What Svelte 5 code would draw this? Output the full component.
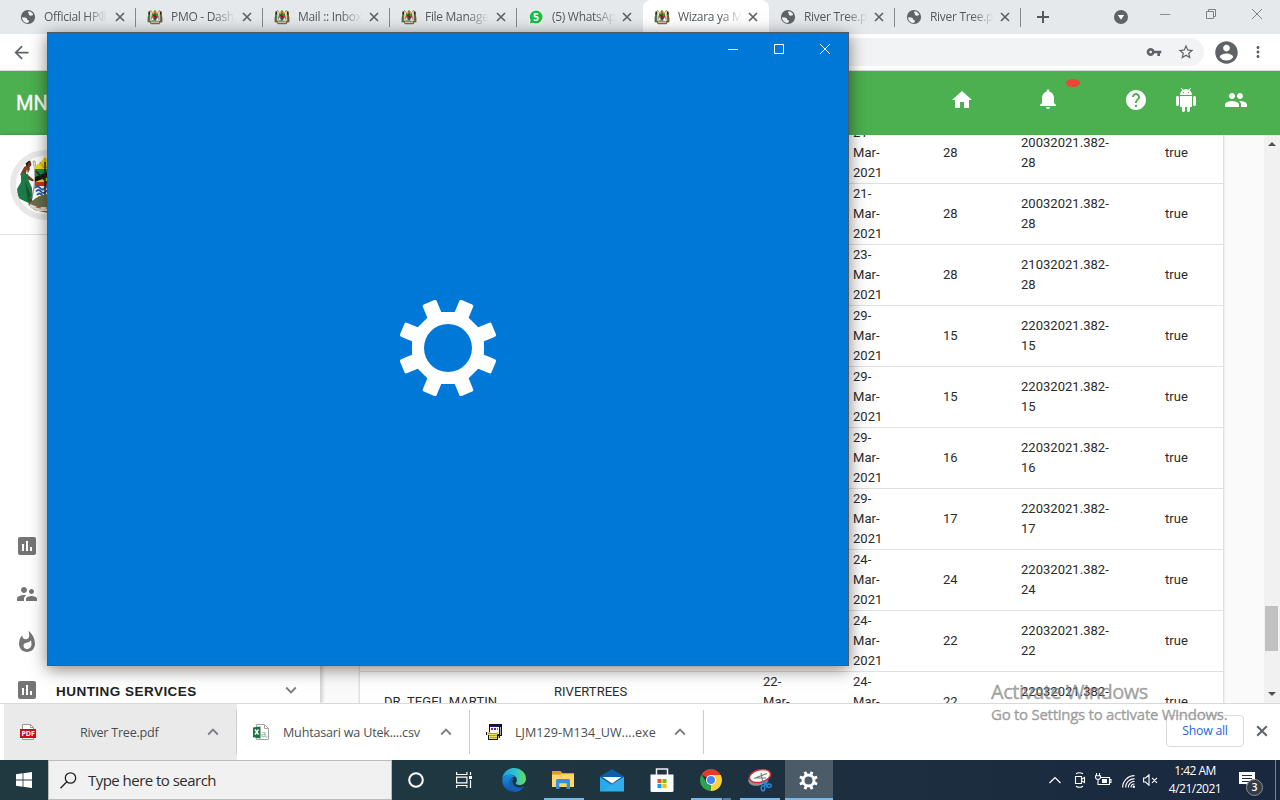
<script>
  const paths = {
    home: 'M10 20v-6h4v6h5v-8h3L12 3 2 12h3v8z',
    bell: 'M12 22c1.1 0 2-.9 2-2h-4c0 1.1.89 2 2 2zm6-6v-5c0-3.07-1.64-5.64-4.5-6.32V4c0-.83-.67-1.5-1.5-1.5s-1.5.67-1.5 1.5v.68C7.63 5.36 6 7.92 6 11v5l-2 2v1h16v-1l-2-2z',
    help: 'M12 2C6.48 2 2 6.48 2 12s4.48 10 10 10 10-4.48 10-10S17.52 2 12 2zm1 17h-2v-2h2v2zm2.07-7.75l-.9.92C13.45 12.9 13 13.5 13 15h-2v-.5c0-1.1.45-2.1 1.17-2.83l1.24-1.26c.37-.36.59-.86.59-1.41 0-1.1-.9-2-2-2s-2 .9-2 2H8c0-2.21 1.79-4 4-4s4 1.79 4 4c0 .88-.36 1.68-.93 2.25z',
    android: 'M6 18c0 .55.45 1 1 1h1v3.5c0 .83.67 1.5 1.5 1.5s1.5-.67 1.5-1.5V19h2v3.5c0 .83.67 1.5 1.5 1.5s1.5-.67 1.5-1.5V19h1c.55 0 1-.45 1-1V8H6v10zM3.5 8C2.67 8 2 8.67 2 9.5v7c0 .83.67 1.5 1.5 1.5S5 17.33 5 16.5v-7C5 8.67 4.33 8 3.5 8zm17 0c-.83 0-1.5.67-1.5 1.5v7c0 .83.67 1.5 1.5 1.5s1.5-.67 1.5-1.5v-7c0-.83-.67-1.5-1.5-1.5zm-4.97-5.84l1.3-1.3c.2-.2.2-.51 0-.71-.2-.2-.51-.2-.71 0l-1.48 1.48C13.85 1.23 12.95 1 12 1c-.96 0-1.86.23-2.66.63L7.85.15c-.2-.2-.51-.2-.71 0-.2.2-.2.51 0 .71l1.31 1.31C6.97 3.26 6 5.01 6 7h12c0-1.99-.97-3.75-2.47-4.84zM10 5H9V4h1v1zm5 0h-1V4h1v1z',
    people: 'M16 11c1.66 0 2.99-1.34 2.99-3S17.66 5 16 5c-1.66 0-3 1.34-3 3s1.34 3 3 3zm-8 0c1.66 0 2.99-1.34 2.99-3S9.66 5 8 5C6.34 5 5 6.34 5 8s1.34 3 3 3zm0 2c-2.33 0-7 1.17-7 3.5V19h14v-2.5c0-2.33-4.67-3.5-7-3.5zm8 0c-.29 0-.62.02-.97.05 1.16.84 1.97 1.97 1.97 3.45V19h6v-2.5c0-2.33-4.67-3.5-7-3.5z',
    chart: 'M19 3H5c-1.1 0-2 .9-2 2v14c0 1.1.9 2 2 2h14c1.1 0 2-.9 2-2V5c0-1.1-.9-2-2-2zM9 17H7v-7h2v7zm4 0h-2V7h2v10zm4 0h-2v-4h2v4z',
    supervisor: 'M16.5 12c1.38 0 2.49-1.12 2.49-2.5S17.88 7 16.5 7C15.12 7 14 8.12 14 9.5s1.12 2.5 2.5 2.5zM9 11c1.66 0 2.99-1.34 2.99-3S10.66 5 9 5C7.34 5 6 6.34 6 8s1.34 3 3 3zm7.5 3c-1.83 0-5.5.92-5.5 2.75V19h11v-2.25c0-1.83-3.67-2.75-5.5-2.75zM9 13c-2.33 0-7 1.17-7 3.5V19h7v-2.25c0-.85.33-2.34 2.37-3.47C10.5 13.1 9.66 13 9 13z',
    flame: 'M13.5.67s.74 2.65.74 4.8c0 2.06-1.35 3.73-3.41 3.73-2.07 0-3.63-1.67-3.63-3.73l.03-.36C5.21 7.51 4 10.62 4 14c0 4.42 3.58 8 8 8s8-3.58 8-8C20 8.61 17.41 3.8 13.5.67zM11.71 19c-1.78 0-3.22-1.4-3.22-3.14 0-1.62 1.05-2.76 2.81-3.12 1.77-.36 3.6-1.21 4.62-2.58.39 1.29.59 2.65.59 4.04 0 2.65-2.15 4.8-4.8 4.8z',
    account: 'M12 2C6.48 2 2 6.48 2 12s4.48 10 10 10 10-4.48 10-10S17.52 2 12 2zm0 3c1.66 0 3 1.34 3 3s-1.34 3-3 3-3-1.34-3-3 1.34-3 3-3zm0 14.2c-2.5 0-4.71-1.28-6-3.22.03-1.99 4-3.08 6-3.08 1.99 0 5.97 1.09 6 3.08-1.29 1.94-3.5 3.22-6 3.22z',
    key: 'M12.65 10C11.83 7.67 9.61 6 7 6c-3.31 0-6 2.69-6 6s2.69 6 6 6c2.61 0 4.83-1.67 5.65-4H17v4h4v-4h2v-4H12.65zM7 14c-1.1 0-2-.9-2-2s.9-2 2-2 2 .9 2 2-.9 2-2 2z',
    star: 'M22 9.24l-7.19-.62L12 2 9.19 8.63 2 9.24l5.46 4.73L5.82 21 12 17.27 18.18 21l-1.63-7.03L22 9.24zM12 15.4l-3.76 2.27 1-4.28-3.32-2.88 4.38-.38L12 6.1l1.71 4.04 4.38.38-3.32 2.88 1 4.28L12 15.4z',
    back: 'M20 11H7.83l5.59-5.59L12 4l-8 8 8 8 1.41-1.41L7.83 13H20v-2z',
    more: 'M12 8c1.1 0 2-.9 2-2s-.9-2-2-2-2 .9-2 2 .9 2 2 2zm0 2c-1.1 0-2 .9-2 2s.9 2 2 2 2-.9 2-2-.9-2-2-2zm0 6c-1.1 0-2 .9-2 2s.9 2 2 2 2-.9 2-2-.9-2-2-2z'
  };

  const tabs = [
    { icon: 'globe', title: 'Official HP®', wide: true, sep: true },
    { icon: 'crest', title: 'PMO - Dash', wide: true, sep: true },
    { icon: 'crest', title: 'Mail :: Inbox', wide: true, sep: true },
    { icon: 'crest', title: 'File Manage', wide: true, sep: true },
    { icon: 'whatsapp', title: '(5) WhatsAp' },
    { icon: 'crest', title: 'Wizara ya M', active: true },
    { icon: 'globe', title: 'River Tree.p', sep: true },
    { icon: 'globe', title: 'River Tree.p', sep: true }
  ];

  const rows = [
    { out: '21-', n: '28', ref: '20032021.382-' },
    { out: '21-', n: '28', ref: '20032021.382-' },
    { out: '23-', n: '28', ref: '21032021.382-' },
    { out: '29-', n: '15', ref: '22032021.382-' },
    { out: '29-', n: '15', ref: '22032021.382-' },
    { out: '29-', n: '16', ref: '22032021.382-' },
    { out: '29-', n: '17', ref: '22032021.382-' },
    { out: '24-', n: '24', ref: '22032021.382-' },
    { out: '24-', n: '22', ref: '22032021.382-' },
    { out: '24-', n: '22', ref: '22032021.382-', name: 'DR. TEGEL MARTIN', place: 'RIVERTREES', in: '22-' }
  ];

  const teeth = [22.5, 67.5, 112.5, 157.5, 202.5, 247.5, 292.5, 337.5];
</script>

{#snippet icon(name, size = 24)}
  <svg class="icon" width={size} height={size} viewBox="0 0 24 24" fill="currentColor"><path d={paths[name]} /></svg>
{/snippet}

{#snippet cross(size, w)}
  <svg class="icon" width={size} height={size} viewBox="0 0 10 10" fill="none" stroke="currentColor" stroke-width={w}><path d="M1 1l8 8M9 1l-8 8" /></svg>
{/snippet}

{#snippet caret(down = false)}
  <svg class="icon caret" width="12" height="8" viewBox="0 0 12 8" fill="none" stroke="#7b7f83" stroke-width="1.9"><path d={down ? 'M1.2 1.5L6 6.3l4.8-4.8' : 'M1.2 6.5L6 1.7l4.8 4.8'} /></svg>
{/snippet}

{#snippet gear(size, hole)}
  <svg class="icon" width={size} height={size} viewBox="-50 -50 100 100">
    <g fill="#fff">
      <path fill-rule="evenodd" d="M-14.9-36H14.9L36-14.9V14.9L14.9 36H-14.9L-36 14.9V-14.9zM{-hole} 0a{hole} {hole} 0 1 0 {hole * 2} 0a{hole} {hole} 0 1 0 {-hole * 2} 0z" />
      {#each teeth as a}
        <rect x="-7.5" y="-49.5" width="15" height="18" rx="1.8" transform="rotate({a})" />
      {/each}
    </g>
  </svg>
{/snippet}

{#snippet favicon(kind)}
  {#if kind === 'globe'}
    <svg class="icon" width="16" height="16" viewBox="0 0 16 16">
      <circle cx="8" cy="8" r="7.1" fill="#5f6368" />
      <path fill="#eef0f1" d="M8.6 2.3c2 .2 3.7 1.4 4.6 3.1l-1 1.1-2 .2-1.4-1 .1-1.1-.9-.8zM2.1 8.3l3.1.2 1.9 1 .1 1.3 1.7.8-.2 1.7-1.6.8c-2.9-.3-5-2.8-5-5.8z" />
    </svg>
  {:else if kind === 'whatsapp'}
    <svg class="icon" width="16" height="16" viewBox="0 0 16 16">
      <path d="M1 15.5l.8-3.7a7.3 7.3 0 1 1 2.7 2.8z" fill="#f4fff7" />
      <circle cx="8.1" cy="8" r="6.4" fill="#12c144" /><path d="M1.9 14.5l1-4 3 3z" fill="#12c144" />
      <text x="8.1" y="11.8" text-anchor="middle" font-size="10.5" font-weight="700" fill="#fff" font-family="Open Sans, sans-serif">5</text>
    </svg>
  {:else}
    <svg class="icon" width="16" height="16" viewBox="0 0 16 16">
      <path d="M1.5 4.2l1.7-3 1.5.9-.9 2.5.9 4-.9 4.7H.6V9z" fill="#4c6e43" />
      <path d="M14.5 4.2l-1.7-3-1.5.9.9 2.5-.9 4 .9 4.7h3.2V9z" fill="#6a5a40" />
      <path d="M3.4 2v10M12.6 2v10" stroke="#d9c9aa" stroke-width="1.1" />
      <path d="M2.2 2.5v3M13.8 2.5v3" stroke="#2f2620" stroke-width="1.6" />
      <path d="M4.8 3.4C6 3 7 2.2 8 .8c1 1.4 2 2.2 3.2 2.6.3 4-1 7.3-3.2 9.200-2.200-1.900-3.500-5.200-3.200-9.200z" fill="#d7b63b" />
      <path d="M4.900 4.600h6.200v1.600H4.900z" fill="#2b8d43" /><path d="M5 6.200h6v2.400H5.300z" fill="#d3282d" /><path d="M5.600 8.600h4.800L8 12z" fill="#2f64b4" />
      <path d="M8 1.500v9M6 6l4 3" stroke="#252b26" stroke-width=".8" />
      <path d="M2 12.500l4-1.200 4 .4 4 1-1.500 2.500H4z" fill="#706f4b" /><path d="M4 13.200h8" stroke="#ddd4c4" stroke-width="1.200" />
    </svg>
  {/if}
{/snippet}

<div class="desktop">
  <div class="browser">
    <div class="tabstrip">
      {#each tabs as t}
        <div class="tab" class:wide={t.wide} class:sep={t.sep} class:active={t.active}>
          {@render favicon(t.icon)}
          <span class="title">{t.title}</span>
          {@render cross(10, 1.7)}
        </div>
      {/each}
      <svg class="icon plus" width="12" height="12" viewBox="0 0 12 12" stroke="#55595d" stroke-width="2"><path d="M6 0v12M0 6h12" /></svg>
      <svg class="icon drop" width="14" height="14" viewBox="0 0 14 14"><circle cx="7" cy="7" r="7" fill="#5f6368" /><path d="M3.8 5h6.400L7 9.800z" fill="#fff" /></svg>
      <div class="winctl">
        <svg class="icon" width="10" height="10" viewBox="0 0 10 10" stroke="#8b8f92"><path d="M0 5.500h10" /></svg>
        <svg class="icon" width="10" height="10" viewBox="0 0 10 10" stroke="#7f8386" fill="none"><path d="M.5 2.500h7v7h-7zM2.500 2.500v-2h7v7h-2" /></svg>
        <svg class="icon" width="10" height="10" viewBox="0 0 10 10" stroke="#7f8386"><path d="M0 0l10 10M10 0L0 10" /></svg>
      </div>
    </div>
    <div class="toolbar">
      <span class="back">{@render icon('back', 21)}</span>
      <div class="omnibox">{@render icon('key', 16)}{@render icon('star', 18)}</div>
      <span class="user">{@render icon('account', 27)}</span>
      {@render icon('more', 18)}
    </div>

    <div class="page">
      <header class="appbar">
        <span class="brand">MN</span>
        <nav>
          {@render icon('home')}
          <span class="bell">{@render icon('bell')}<i class="badge"></i></span>
          {@render icon('help')}
          {@render icon('android')}
          {@render icon('people')}
        </nav>
      </header>
      <div class="body">
        <aside>
          <div class="profile">
            <div class="avatar">
              <svg width="58" height="58" viewBox="0 0 58 58">
                <path d="M17 5q4 14-1 37l-3 6q10-22 6-43z" fill="#f6f3ec" stroke="#8f8b83" stroke-width=".7" />
                <path d="M12 9l-4 2-4 8 6 2 4-8zM11 13l1 6 6 5-1 1.500-8-3z" fill="#7a4226" />
                <path d="M10 7q2-3 5-1l.5 3-2.500 3-3-2z" fill="#6b3520" />
                <path d="M9 7q2-4 6-2l-3 2-1 3z" fill="#1d1512" />
                <path d="M5 17l7 1 .5 6 3.500 8 .5 10-4 5L2 42 1 33l4-7z" fill="#1e7a46" />
                <path d="M9 25l6 14-3 7z" fill="#14582f" />
                <path d="M13 43l3 0 1 6-4-1z" fill="#70391f" />
                <path d="M19 10Q26 6 29 0q3 6 10 10v19q-2 15-10 21-8-6-10-21z" fill="#f2de1d" />
                <path d="M29 2v10M24 6l4 6M34 6l-4 6" stroke="#c7931b" stroke-width="1" />
                <path d="M19 13h20v8l-20 3z" fill="#1f8f3f" /><path d="M19 21l20-8v5l-20 8z" fill="#151713" />
                <path d="M19 26h20v4H19z" fill="#d32f27" /><path d="M19.200 30h19.600l-2 10H21z" fill="#fff" />
                <path d="M19 32q2.500-3 5 0t5 0 5 0 5 0M20 35.500q2.500-3 5 0t5 0 5 0M21 39q2.500-3 5 0t5 0 4 0" stroke="#1f5fb8" stroke-width="1.800" fill="none" />
                <path d="M29 6v34M20 15l15 16" stroke="#262420" stroke-width="1.400" />
                <path d="M12 48l8-6 6-3 6 0 14 9v5l-14 4-14-3z" fill="#69704c" />
                <path d="M14 48l8 3h14l8-3v4l-8 3H22l-8-3z" fill="#ddd8c9" /><path d="M20 51l5 1M30 52h4" stroke="#b5473b" stroke-width="1.200" />
              </svg>
            </div>
          </div>
          <div class="menu">
            <div class="item">{@render icon('chart')}</div>
            <div class="item">{@render icon('supervisor')}</div>
            <div class="item">{@render icon('flame')}</div>
            <div class="item">{@render icon('chart')}<b>HUNTING SERVICES</b>{@render caret(true)}</div>
          </div>
        </aside>
        <main>
          <div class="table">
            {#each rows as r}
              <div class="row">
                <span>{r.name ?? ''}</span>
                <span>{#if r.place}{r.place}<br />&nbsp;{/if}</span>
                <span>{#if r.in}{r.in}<br />Mar-<br />&nbsp;{/if}</span>
                <span>{r.out}<br />Mar-<br />2021</span>
                <span>{r.n}</span>
                <span>{r.ref}<br />{r.n}</span>
                <span>true</span>
              </div>
            {/each}
          </div>
        </main>
        <div class="scrollbar">
          <i class="up"></i>
          <i class="thumb"></i>
          <i class="down"></i>
        </div>
      </div>
    </div>

    <div class="downloads">
      <div class="dl first">
        <svg class="icon" width="16" height="16" viewBox="0 0 16 16"><path d="M2.500.5h8l3 3v12h-11z" fill="#fff" stroke="#999" /><path d="M10.500.5v3h3" fill="none" stroke="#999" /><path d="M0 5h16v9H0z" fill="#cb0d21" /><text x="8" y="12" text-anchor="middle" font-size="7" font-weight="700" fill="#fff" font-family="Open Sans, sans-serif" textLength="13">PDF</text></svg>
        <span>River Tree.pdf</span>{@render caret()}
      </div>
      <div class="dl second">
        <svg class="icon" width="16" height="16" viewBox="0 0 16 16"><path d="M3.500.5h8l4 4v11h-12z" fill="#fff" stroke="#a5a5a5" /><path d="M11.500.5v4h4" fill="none" stroke="#a5a5a5" /><path d="M0 3.500L7.500 2.500v12L0 13.300z" fill="#1f7345" /><path d="M2 5.500l3.500 5M5.500 5.500L2 10.500" stroke="#fff" stroke-width="1.400" /><text x="8" y="13" font-size="9" fill="#5ca77e" font-family="Open Sans, sans-serif">a,</text></svg>
        <span>Muhtasari wa Utek....csv</span>{@render caret()}
      </div>
      <div class="dl third">
        <svg class="icon" width="16" height="16" viewBox="0 0 16 16"><path d="M3 0h13v12h-2v2h-2v2H2v-5H0V8h3z" fill="#111" /><path d="M4 1h10v2H4z" fill="#10108f" /><path d="M4 3h9v7H4z" fill="#fff" /><path d="M14 3h1v8h-1zM12 12h1v2h-1z" fill="#aaa" /><path d="M5 4h2v2H5z" fill="#c0202a" /><path d="M8 4h2v2H8z" fill="#2b36a8" /><path d="M11 4h1v2h-1z" fill="#26976a" /><path d="M1 8h2l2 1h4l2-1h2l-2 3v4H3v-4H1z" fill="#e8e15b" /><path d="M2 9.500h9M3 11.500h8M4 13.500h7" stroke="#8d8726" stroke-width=".7" /></svg>
        <span>LJM129-M134_UW....exe</span>{@render caret()}
      </div>
      <button>Show all</button>
      <span class="closebar">{@render cross(12, 1.7)}</span>
    </div>
  </div>

  <div class="taskbar">
    <div class="start"><svg class="icon" width="16" height="16" viewBox="0 0 16 16" fill="#fff"><path d="M0 2.200L6.600 1.300v6.300H0zM7.400 1.200L16 0v7.600H7.400zM0 8.400h6.600v6.300L0 13.800zM7.400 8.400H16V16l-8.600-1.200z" /></svg></div>
    <div class="search">
      <svg class="icon" width="17" height="17" viewBox="0 0 17 17" fill="none" stroke="#222" stroke-width="1.300"><circle cx="10.500" cy="6" r="5.200" /><path d="M6.800 9.700L.5 16.200" /></svg>
      <span>Type here to search</span>
    </div>
    <div class="apps">
      <div class="app"><svg class="icon" width="18" height="18" viewBox="0 0 18 18"><circle cx="9" cy="9" r="6.800" fill="none" stroke="#fff" stroke-width="2" /></svg></div>
      <div class="app"><svg class="icon" width="17" height="16" viewBox="0 0 17 16" fill="none" stroke="#fff" stroke-width="1.200"><path d="M.6 0v2.500h10.300V0M.6 16v-2.500h10.300V16M.6 5.100h10.300v5.800H.6zM14.500 0v3M14.500 8v8" /><path d="M13 4h3v3h-3z" fill="#fff" stroke="none" /></svg></div>
      <div class="app edge">
        <svg class="icon" width="24" height="24" viewBox="0 0 24 24">
          <defs>
            <linearGradient id="eg" x1="0" y1=".3" x2="1" y2=".3"><stop offset="0" stop-color="#1b9de2" /><stop offset=".6" stop-color="#37c6c9" /><stop offset="1" stop-color="#66df52" /></linearGradient>
            <linearGradient id="eb" x1="0" y1="0" x2="0" y2="1"><stop offset="0" stop-color="#1791dc" /><stop offset="1" stop-color="#1153a8" /></linearGradient>
          </defs>
          <path d="M.3 10.500C1 4.400 6 0 12 0c6.800 0 12 5 12 10.700 0 3.800-2.900 6.300-6.300 6.300-2.600 0-3.900-.9-3.900-1.700 0-.7 1.100-1.200 1.100-3.300C14.900 9 12 6.800 8.400 6.800 4.200 6.800 1 9 .3 10.500z" fill="url(#eg)" />
          <path d="M.2 11.300C1 8.600 4.200 6.800 7.900 6.800c2.200 0 4.300.7 5.500 2-2.300-.3-4.900 1.600-4.900 5 0 4.700 4.400 7.700 8.500 6.900 1.900-.4 3.300-1.100 4.500-2-2 3.300-5.600 5.300-9.500 5.300C5.200 24 0 18.400.2 11.300z" fill="url(#eb)" />
          <path d="M10.500 9.200c-3.500 1.500-4.800 6-2.600 9.600 1.300 2.200 3.600 3.900 6 4.900 3.500-.5 6.300-2.600 7.800-5.300-3 1.900-7.100 1.700-9.400-.7-2-2-2.600-5.400-.7-7.800z" fill="#1463b8" />
        </svg>
      </div>
      <div class="app run"><svg class="icon" width="22" height="20" viewBox="0 0 22 20"><path d="M0 1.500h8.500L10 3.200h12V17H0z" fill="#f9cb4f" /><path d="M0 1h8.500L10 2.800 8.500 4.500H0z" fill="#dda016" /><path d="M0 5h22v12H0z" fill="#ffd869" /><path d="M4 10.500Q4 9 5.500 9h11Q18 9 18 10.500V19h-3.500v-5.500h-7V19H4z" fill="#388fe0" /><path d="M7.500 13.500h7V17h-7z" fill="#ffd45d" /></svg></div>
      <div class="app"><svg class="icon" width="24" height="23" viewBox="0 0 24 23"><path d="M0 7.500L12 0l12 7.500V22H0z" fill="#0b5ea9" /><path d="M0 8l12 8L0 22.500z" fill="#29a8ea" /><path d="M24 8v14.500L12 16z" fill="#1e91db" /><path d="M0 22.500L24 8v14.500z" fill="#2fb0ee" /><path d="M2.500 8h19L12 14.500z" fill="#f3f7fb" /></svg></div>
      <div class="app"><svg class="icon" width="24" height="24" viewBox="0 0 24 24"><path d="M6.500 7V1h11v6" fill="none" stroke="#eee" stroke-width="1.500" /><path d="M.5 6.500h23v16.200q0 1.300-1.300 1.300H1.800Q.5 24 .5 22.700z" fill="#fafafa" /><path d="M7.500 11h4v4h-4z" fill="#f25022" /><path d="M12.500 11h4v4h-4z" fill="#7fba00" /><path d="M7.500 16h4v4h-4z" fill="#00a4ef" /><path d="M12.500 16h4v4h-4z" fill="#ffb900" /></svg></div>
      <div class="app run multi"><svg class="icon" width="22" height="22" viewBox="0 0 22 22"><path d="M11 11L1.500 5.500A11 11 0 0 1 20.500 5.500z" fill="#e33b2e" /><path d="M11 11V6h9.800A11 11 0 0 1 10.700 22z" fill="#fdd13a" /><path d="M1.500 5.500L6.700 13.500l4.300 3-.5 5.500A11 11 0 0 1 1.500 5.500z" fill="#2ba24c" /><path d="M11 6h9.500L15.500 13.500l-5 8.500 1-6z" fill="#fdd13a" /><circle cx="11" cy="11" r="5" fill="#fff" /><circle cx="11" cy="11" r="4" fill="#4486f4" /></svg></div>
      <div class="app run"><svg class="icon" width="24" height="24" viewBox="0 0 24 24"><ellipse cx="10.500" cy="11" rx="10.500" ry="6.500" transform="rotate(-14 10.500 11)" fill="#8d9298" /><ellipse cx="12" cy="8" rx="10.800" ry="6.200" transform="rotate(-14 12 8)" fill="#fff" stroke="#cf3036" stroke-width="1.500" /><path d="M6 10.500l13-5M13 5l2 10M8 10h10" stroke="#777" stroke-width="1.100" /><g fill="none" stroke="#2384d4" stroke-width="1.600"><path d="M14 13l6 6M20 13l-4 5" /><ellipse cx="15" cy="20.300" rx="1.800" ry="2.600" /><ellipse cx="21" cy="17.800" rx="2.300" ry="1.700" /></g></svg></div>
      <div class="app current">{@render gear(19, 21)}</div>
    </div>
    <div class="tray">
      <svg class="icon chev" width="12" height="8" viewBox="0 0 12 8" fill="none" stroke="#fff" stroke-width="1.200"><path d="M.5 7L6 1.500 11.500 7" /></svg>
      <svg class="icon meet" width="12" height="16" viewBox="0 0 12 16" fill="none" stroke="#fff" stroke-width="1.100"><path d="M2 1.800Q5.500-.4 9 1.800M2 14.200q3.500 2.200 7 0M1.500 4.500h6v7h-6zM8 7l2.500-1.500v5L8 9" /></svg>
      <svg class="icon batt" width="17" height="14" viewBox="0 0 17 14" fill="none" stroke="#fff" stroke-width="1.100"><path d="M5 4.500h9.500v7H4M14.500 6.500H16v3h-1.500M1.500 0v2.500M4.500 0v2.500M.5 2.700h5v2Q5 6.500 3 6.500T.5 4.700zM3 6.500v5h1" /><path d="M7 6h5v4H7z" fill="#fff" stroke="none" /></svg>
      <svg class="icon wifi" width="13" height="13" viewBox="0 0 13 13" fill="none" stroke="#fff" stroke-width="1.100"><path d="M.6 12.500A12 12 0 0 1 12.500.6M3.600 12.500A9 9 0 0 1 12.500 3.600M6.300 12.500a6.300 6.300 0 0 1 6.200-6.200M9 12.500A3.500 3.500 0 0 1 12.500 9" /><circle cx="11.800" cy="11.800" r="1.200" fill="#fff" stroke="none" /></svg>
      <svg class="icon vol" width="15" height="12" viewBox="0 0 15 12" fill="none" stroke="#fff" stroke-width="1.100"><path d="M.6 4h2L6 .8v10.400L2.600 8h-2zM9 3.800l5 5M14 3.800l-5 5" /></svg>
      <div class="clock">1:42 AM<br />4/21/2021</div>
      <div class="notes"><svg class="icon" width="16" height="16" viewBox="0 0 16 16"><path d="M0 0h16v12h-5v4l-4-4H0z" fill="#fff" /><path d="M3 3.500h10M3 6.500h10M3 9.500h7" stroke="#1b2b43" stroke-width="1" /></svg><b>3</b></div>
      <i class="peek"></i>
    </div>
  </div>

  <section class="settings">
    <div class="controls">
      <svg class="icon" width="10" height="10" viewBox="0 0 10 10" stroke="#fff"><path d="M0 5.500h10" /></svg>
      <svg class="icon" width="10" height="10" viewBox="0 0 10 10" stroke="#fff" fill="none"><path d="M.5.5h9v9h-9z" /></svg>
      <svg class="icon" width="10" height="10" viewBox="0 0 10 10" stroke="#fff"><path d="M0 0l10 10M10 0L0 10" /></svg>
    </div>
    <div class="splash">{@render gear(100, 24)}</div>
  </section>

  <div class="watermark"><strong>Activate Windows</strong><span>Go to Settings to activate Windows.</span></div>
</div>

<style>
  :global(body) { margin: 0; overflow: hidden; }
  * { box-sizing: border-box; }
  .icon { display: block; flex: none; }
  .desktop { position: relative; width: 1280px; height: 800px; overflow: hidden; display: flex; flex-direction: column; font-family: "Open Sans", "Noto Sans", sans-serif; background: #fff; }
  .browser { height: 760px; display: flex; flex-direction: column; }

  .tabstrip { height: 34px; flex: none; display: flex; align-items: flex-start; background: #e6e9ec; padding-left: 9px; color: #5f6368; }
  .tab { position: relative; width: 126px; height: 34px; display: flex; align-items: center; padding-left: 11px; }
  .tab.wide { width: 127px; }
  .tab.sep::after { content: ""; position: absolute; right: 0; top: 8px; width: 1px; height: 19px; background: #85898c; }
  .tab.active { background: #fff; border-radius: 8px 8px 0 0; }
  .title { flex: none; width: 64px; margin: 0 6px 0 8px; font-size: 12px; letter-spacing: -.3px; line-height: 18px; white-space: nowrap; overflow: hidden; color: #55595e; mask-image: linear-gradient(90deg, #000 66%, transparent 100%); }
  .wide .title { margin-right: 7px; }
  .plus { margin: 11px 0 0 16px; }
  .drop { margin: 10px 0 0 65px; }
  .winctl { display: flex; gap: 36px; margin: 9px 0 0 32px; }

  .toolbar { height: 37px; flex: none; display: flex; align-items: center; background: #fff; border-bottom: 1px solid #d8dbdc; color: #5f6368; padding: 0 13px 0 11px; }
  .back { margin-right: 16px; }
  .omnibox { width: 1156px; height: 28px; border-radius: 14px; background: #f1f3f4; display: flex; align-items: center; justify-content: flex-end; gap: 15px; padding-right: 9px; }
  .user { margin: 0 9px 0 8.5px; }

  .page { height: 632px; flex: none; display: flex; flex-direction: column; overflow: hidden; }
  .appbar { height: 64px; flex: none; background: #4caf50; color: #fff; display: flex; align-items: center; justify-content: space-between; padding: 0 32px 6px 16px; }
  .brand { font: 400 20px Roboto, sans-serif; padding-top: 6px; -webkit-text-stroke: .3px #fff; }
  nav { display: flex; align-items: center; gap: 26px; }
  .bell { position: relative; margin: -2px 38.5px 0 35.5px; }
  .badge { position: absolute; left: 30.5px; top: -8px; width: 14px; height: 8px; border-radius: 50%; background: #f44336; }
  .body { flex: 1; min-height: 0; display: flex; background: #fafafa; }
  aside { width: 321px; flex: none; background: #fff; box-shadow: 1px 0 4px rgba(0,0,0,.22); border-right: 1px solid #d6d6d6; display: flex; flex-direction: column; }
  .profile { height: 100px; flex: none; padding: 15px 0 0 10px; border-bottom: 1px solid #e0e0e0; }
  .avatar { width: 70px; height: 70px; border: 6px solid #e8e8e8; border-radius: 50%; overflow: hidden; background: #fff; }
  .avatar svg { display: block; }
  .menu { margin-top: 287px; }
  .item { height: 48px; display: flex; align-items: center; padding-left: 15px; color: #757575; }
  .item b { margin-left: 17px; color: #212121; font: 700 13.5px "Liberation Sans", sans-serif; letter-spacing: .47px; width: 229px; padding-top: 2px; }
  main { width: 943px; flex: none; overflow: hidden; padding-left: 38px; }
  .table { width: 865px; margin-top: -12px; background: #fff; border-left: 1px solid #e0e0e0; border-right: 1px solid #e0e0e0; box-shadow: 0 0 2px rgba(0,0,0,.12); }
  .row { height: 61px; display: grid; grid-template-columns: 170px 209px 90px 90px 78px 144px 1fr; padding-left: 24px; align-items: center; border-bottom: 1px solid #e0e0e0; font: 13px/20px Roboto, sans-serif; letter-spacing: .03px; color: #2b2b2b; white-space: nowrap; }
  .scrollbar { width: 16px; flex: none; background: #f1f1f1; display: flex; flex-direction: column; align-items: center; padding-right: 1px; }
  .up { margin-top: 7px; border: 4px solid transparent; border-top: 0; border-bottom: 4px solid #505050; }
  .thumb { width: 13px; height: 45px; margin-top: 460px; background: #c1c1c1; }
  .down { margin-top: 41px; border: 4px solid transparent; border-bottom: 0; border-top: 4px solid #505050; }

  .downloads { height: 57px; flex: none; display: flex; align-items: flex-start; background: #fff; border-top: 1px solid #d9d9d9; padding-left: 4px; color: #4d5156; }
  .dl { position: relative; display: flex; align-items: center; height: 56px; font-size: 12.6px; letter-spacing: -.25px; white-space: nowrap; padding-left: 16px; width: 233px; color: #4b4f53; }
  .dl::after { content: ""; position: absolute; right: 0; top: 6px; width: 1px; height: 44px; background: #ccc; }
  .first { background: #eaeaea; }
  .third { width: 234px; }
  .first span { margin-left: 44px; width: 127px; }
  .second span { margin-left: 14px; width: 157px; letter-spacing: -.21px; }
  .third span { margin-left: 13px; width: 159px; letter-spacing: .03px; }
  button { margin: 11px 0 0 462px; width: 78px; height: 32px; border: 1px solid #d9dbde; border-radius: 4px; background: #fff; color: #1a66e8; font: 500 12.3px "Open Sans", sans-serif; letter-spacing: -.25px; padding: 0 0 1px; white-space: nowrap; }
  .closebar { margin: 21px 0 0 12px; color: #5f6368; }

  .taskbar { height: 40px; display: flex; background: linear-gradient(90deg, #203840 0%, #1f3740 40%, #1d303f 60%, #19283f 100%); color: #fff; }
  .start { width: 48px; display: flex; align-items: center; justify-content: center; }
  .search { width: 344px; border: 1px solid #b9bcbd; background: #f1f1f1; display: flex; align-items: center; padding-left: 11px; color: #2d2d2d; font-size: 15px; letter-spacing: -.53px; }
  .search span { margin-left: 11px; }
  .apps { display: flex; margin-left: -1px; }
  .app { position: relative; width: 49.2px; display: flex; align-items: center; justify-content: center; }
  .edge { padding-left: 1px; }
  .run::after { content: ""; position: absolute; bottom: 0; left: 5px; width: 40px; height: 2px; background: #76b9ed; }
  .multi::after { background: linear-gradient(90deg, #76b9ed 31px, #253c50 31px, #253c50 32px, #527fa5 32px); }
  .current { width: 48px; background: #4c5b68; border-bottom: 2px solid #76b9ed; padding-top: 2px; }
  .tray { flex: 1; display: flex; align-items: center; justify-content: flex-end; }
  .meet { margin-left: 13px; }
  .batt { margin-left: 9px; }
  .wifi { margin: 2px 0 0 10px; }
  .vol { margin-left: 8px; }
  .clock { width: 66px; margin-left: 4px; text-align: center; font-size: 12px; line-height: 18px; letter-spacing: -.5px; }
  .notes { position: relative; width: 23px; margin-left: 11px; }
  .notes b { position: absolute; left: 7px; top: 7px; width: 17px; height: 17px; border: 1px solid #8a9098; border-radius: 50%; background: #353c46; font: 600 10.5px/15px "Open Sans", sans-serif; text-align: center; }
  .peek { width: 1px; height: 40px; margin: 0 4px 0 13px; background: #7b8491; }

  .settings { position: absolute; left: 47px; top: 32px; width: 802px; height: 634px; border: 1px solid #515a62; background: #0078d7; box-shadow: 0 3px 16px rgba(0,0,0,.5); display: flex; flex-direction: column; z-index: 2; }
  .controls { display: flex; justify-content: flex-end; gap: 36px; padding: 11px 18px 0 0; height: 31px; }
  .splash { flex: 1; display: grid; place-items: center; padding-bottom: 33px; }
  .watermark { position: absolute; left: 991px; top: 679px; z-index: 3; display: flex; flex-direction: column; color: rgba(125,125,125,.68); white-space: nowrap; -webkit-text-stroke: .4px rgba(125,125,125,.68); }
  .watermark strong { font-weight: 400; font-size: 20px; line-height: 26px; letter-spacing: -.45px; }
  .watermark span { font-size: 15px; line-height: 20px; letter-spacing: -.27px; margin-top: -1px; }
</style>
